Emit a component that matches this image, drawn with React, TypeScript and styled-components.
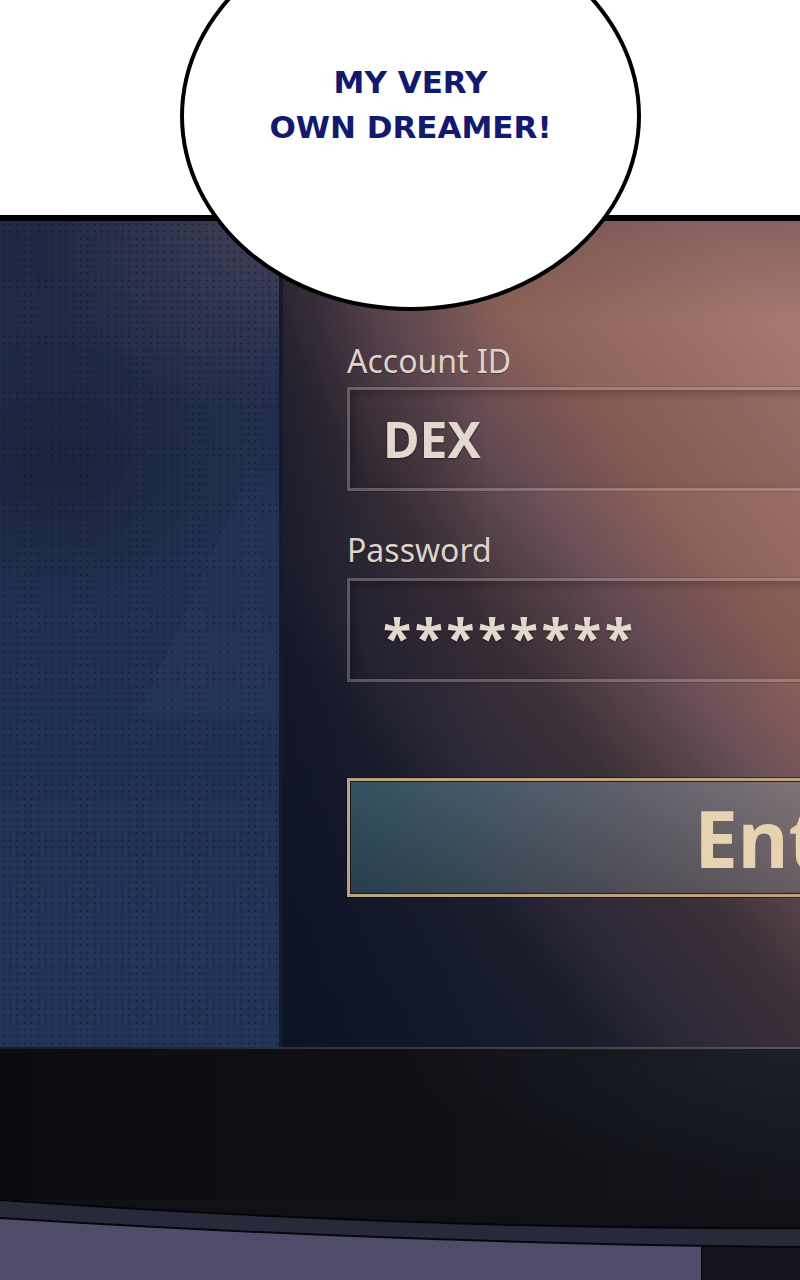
import React from "react";
import styled, { createGlobalStyle } from "styled-components";

const Global = createGlobalStyle`
  html, body { margin: 0; padding: 0; background: #fff; }
  body { width: 800px; height: 1280px; overflow: hidden; }
`;

const Frame = styled.div`
  position: relative;
  width: 800px;
  height: 1280px;
  overflow: hidden;
  display: flex;
  flex-direction: column;
  background: #fff;
`;

const Gutter = styled.div`
  flex: none;
  height: 215px;
  background: #fff;
`;

const Panel = styled.section`
  flex: 1;
  min-height: 0;
  display: flex;
  flex-direction: column;
  border-top: 6px solid #000;
  background: #0e0f13;
`;

const Screen = styled.div`
  flex: none;
  height: 826px;
  display: flex;
`;

const SidePane = styled.div`
  position: relative;
  flex: none;
  width: 279px;
  border-right: 4px solid #131a2b;
  background-image:
    radial-gradient(circle, rgba(12, 18, 34, 0.45) 0.9px, transparent 1.4px),
    radial-gradient(ellipse 320px 260px at 100% 0%, rgba(95, 82, 104, 0.55), transparent 75%),
    radial-gradient(ellipse 220px 180px at 20% 30%, rgba(18, 26, 46, 0.5), transparent 80%),
    linear-gradient(180deg, #1e2944 0%, #223152 45%, #213458 100%);
  background-size: 7px 7px, 100% 100%, 100% 100%, 100% 100%;
  &::after {
    content: "";
    position: absolute;
    inset: 0;
    background: rgba(120, 140, 180, 0.045);
    clip-path: polygon(250px 250px, 279px 250px, 279px 494px, 138px 494px);
  }
`;

const MainPane = styled.div`
  flex: 1;
  min-width: 0;
  overflow: hidden;
  display: flex;
  flex-direction: column;
  align-items: flex-start;
  padding: 120px 0 0 64px;
  background:
    linear-gradient(90deg, rgba(14, 18, 36, 0.55) 0%, rgba(14, 18, 36, 0.2) 18%, rgba(14, 18, 36, 0) 40%),
    linear-gradient(180deg, rgba(40, 30, 45, 0.25) 0%, rgba(40, 30, 45, 0) 12%),
    linear-gradient(51deg, #0a1527 0%, #1a1d2c 27%, #2c2838 34%, #3c3038 46%, #6c5058 59%, #8d6257 70%, #a57870 92%, #a87a72 100%);
`;

const Label = styled.div`
  font-family: "Noto Sans", "Open Sans", sans-serif;
  font-size: 32px;
  line-height: 40px;
  color: #ddd3c9;
  text-shadow: 0 1px 1px rgba(0, 0, 0, 0.35);
`;

const InputBox = styled.div<{ $gap: number }>`
  box-sizing: border-box;
  width: 620px;
  height: 104px;
  margin-top: ${(p) => p.$gap}px;
  margin-bottom: 39px;
  padding-left: 33px;
  display: flex;
  align-items: center;
  border: 3px solid rgba(228, 210, 205, 0.3);
  box-shadow: inset 3px 3px 8px rgba(0, 0, 0, 0.25), 0 0 0 1px rgba(0, 0, 0, 0.12);
  background: rgba(20, 10, 20, 0.08);
`;

const Value = styled.span`
  font-family: "Noto Sans", "Open Sans", sans-serif;
  font-weight: 700;
  font-size: 50px;
  color: #e2d8cd;
  text-shadow: 0 1px 2px rgba(0, 0, 0, 0.55);
`;

const Masked = styled.span`
  font-family: "Noto Sans", "Open Sans", sans-serif;
  font-weight: 700;
  font-size: 52px;
  letter-spacing: 3.5px;
  padding-top: 12px;
  color: #e2d8cd;
  text-shadow: 0 1px 2px rgba(0, 0, 0, 0.55);
`;

const EnterButton = styled.button`
  flex: none;
  box-sizing: border-box;
  margin-top: 57px;
  width: 904px;
  height: 119px;
  padding: 0;
  border: 3px solid #bea27c;
  box-shadow: inset 0 0 0 1px rgba(20, 20, 26, 0.85), 0 0 0 1px rgba(0, 0, 0, 0.45);
  background:
    linear-gradient(180deg, rgba(255, 255, 255, 0.04), rgba(0, 0, 0, 0.18)),
    linear-gradient(100deg, #2b4a5c 0%, #3e5363 14%, #5a5b67 30%, #7b6e73 50%, #7b6e73 100%);
  font-family: "Noto Sans", "Open Sans", sans-serif;
  font-weight: 700;
  font-size: 78px;
  line-height: 1;
  color: #e7d3af;
  text-align: center;
  cursor: pointer;
`;

const Bezel = styled.div`
  flex: none;
  height: 153px;
  border-top: 2px solid transparent;
  border-image: linear-gradient(90deg, rgba(60, 60, 75, 0.3), rgba(150, 130, 135, 0.55)) 1;
  box-sizing: border-box;
  background:
    radial-gradient(ellipse 500px 160px at 100% 0%, rgba(36, 40, 56, 0.5), transparent 80%),
    linear-gradient(90deg, #0c0c10 0%, #0f1015 50%, #15161d 100%);
`;

const Floor = styled.svg`
  flex: none;
  display: block;
  width: 800px;
  height: 80px;
`;

const Bubble = styled.div`
  position: absolute;
  left: 180px;
  top: -79px;
  width: 461px;
  height: 390px;
  box-sizing: border-box;
  border: 4px solid #000;
  border-radius: 50%;
  background: #fff;
  z-index: 2;
  display: flex;
  flex-direction: column;
  align-items: center;
  justify-content: center;
  padding-bottom: 22px;
`;

const BubbleLine = styled.span`
  font-family: "DejaVu Sans", "Lato", sans-serif;
  font-weight: 700;
  font-size: 31px;
  line-height: 45px;
  color: #0f1a70;
`;

export default function App() {
  return (
    <>
      <Global />
      <Frame>
        <Gutter />
        <Panel>
          <Screen>
            <SidePane />
            <MainPane>
              <Label>Account ID</Label>
              <InputBox $gap={6}>
                <Value>DEX</Value>
              </InputBox>
              <Label>Password</Label>
              <InputBox $gap={8}>
                <Masked>********</Masked>
              </InputBox>
              <EnterButton>Enter</EnterButton>
            </MainPane>
          </Screen>
          <Bezel />
          <Floor viewBox="0 0 800 80" preserveAspectRatio="none">
            <rect x="0" y="0" width="800" height="80" fill="#101117" />
            <path d="M0,0 Q416,29.4 800,28.3 L800,47 Q416,44 0,18 Z" fill="#282a3c" />
            <path d="M0,18 Q416,44 800,47 L800,80 L0,80 Z" fill="#4e4c69" />
            <path d="M702,45.5 L800,47 L800,80 L702,80 Z" fill="#15161d" />
            <path d="M0,0 Q416,29.4 800,28.3" fill="none" stroke="#050508" strokeWidth="2" />
            <path d="M0,18 Q416,44 800,47" fill="none" stroke="#07070b" strokeWidth="2" />
            <line x1="702" y1="45.5" x2="702" y2="80" stroke="#0a0a0e" strokeWidth="2" />
          </Floor>
        </Panel>
        <Bubble>
          <BubbleLine>MY VERY</BubbleLine>
          <BubbleLine>OWN DREAMER!</BubbleLine>
        </Bubble>
      </Frame>
    </>
  );
}
